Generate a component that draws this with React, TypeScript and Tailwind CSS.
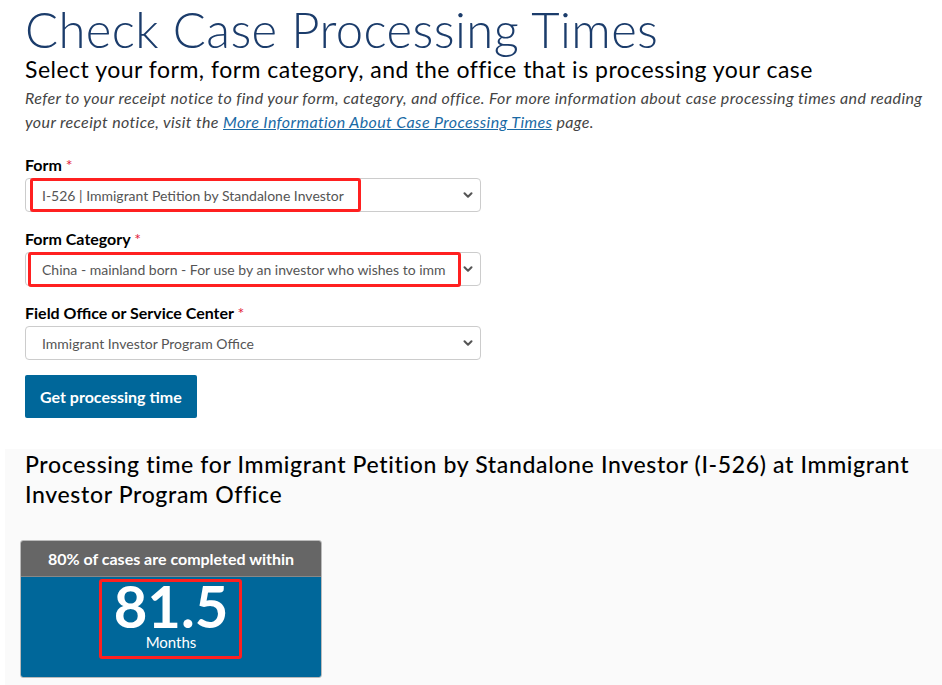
import { ChevronDown } from "lucide-react"

const font = { fontFamily: "Lato, 'Open Sans', sans-serif" }

const Field = ({
	label,
	value,
	mark,
}: {
	label: string
	value: string
	mark?: string
}) => {
	return (
		<div className="flex flex-col">
			<p className="text-[16px] font-bold text-black leading-[20px] mb-[3px]">
				{label} <span className="text-[#e31c3d] font-normal">*</span>
			</p>
			<div className="relative w-[456px]">
				<select
					className="appearance-none w-full h-[34px] border border-[#cccccc] rounded-[4px] bg-white pl-[16px] pr-[34px] text-[14px] text-[#555555] outline-none"
					defaultValue={value}
				>
					<option>{value}</option>
				</select>
				<ChevronDown
					className="absolute right-[6px] top-[10px] w-[14px] h-[14px] text-[#555555] pointer-events-none"
					strokeWidth={3.5}
				/>
				{mark && <div className={mark} />}
			</div>
		</div>
	)
}

export default function App() {
	return (
		<div className="w-[942px] min-h-[685px] bg-white overflow-hidden" style={font}>
			<div className="pl-[25px] pr-[5px]">
				<h1 className="text-[49px] font-light text-[#1b3c6b] leading-[58px] tracking-[0.4px]">
					Check Case Processing Times
				</h1>
				<h2 className="text-[23px] text-black leading-[26px] mt-[-2px] tracking-[0.5px]">
					Select your form, form category, and the office that is processing your case
				</h2>
				<p className="text-[16px] italic text-[#444444] leading-[24px] mt-[4px] tracking-[0.38px]">
					Refer to your receipt notice to find your form, category, and office. For more
					information about case processing times and reading your receipt notice, visit
					the{" "}
					<a href="#" className="text-[#1a6aa5] underline">
						More Information About Case Processing Times
					</a>{" "}
					page.
				</p>

				<div className="flex flex-col gap-[17px] mt-[21px]">
					<Field
						label="Form"
						value="I-526 | Immigrant Petition by Standalone Investor"
						mark="absolute left-[5px] top-[0px] w-[331px] h-[34px] border-[3px] border-[#ff2020] rounded-[3px] pointer-events-none"
					/>
					<Field
						label="Form Category"
						value="China - mainland born - For use by an investor who wishes to immigrate based on an investment"
						mark="absolute left-[3px] top-[0px] w-[433px] h-[35px] border-[3px] border-[#ff2020] rounded-[3px] pointer-events-none"
					/>
					<Field label="Field Office or Service Center" value="Immigrant Investor Program Office" />
				</div>

				<button className="mt-[15px] h-[43px] px-[15px] bg-[#00679a] text-white text-[16px] font-bold rounded-[2px]">
					Get processing time
				</button>
			</div>

			<div className="ml-[5px] mt-[31px] bg-[#fafafa] pl-[15px] pt-0 pb-[8px]">
				<h3 className="ml-[5px] text-[23px] font-medium text-black leading-[30px] pr-[20px] tracking-[0.65px]">
					Processing time for Immigrant Petition by Standalone Investor (I-526) at Immigrant
					Investor Program Office
				</h3>
				<div className="mt-[31px] w-[302px] rounded-[3px] overflow-hidden border border-[#bbbbbb]">
					<div className="h-[35px] bg-[#666666] flex items-center justify-center text-white text-[16px] font-bold">
						80% of cases are completed within
					</div>
					<div className="relative h-[101px] bg-[#00679a] border-t border-[#888888] flex flex-col items-center">
						<span className="text-[58px] font-bold text-white leading-[50px] mt-[4px]">81.5</span>
						<span className="text-[15px] text-white leading-[18px] mt-[2px]">Months</span>
						<div className="absolute left-[78px] top-[2px] w-[143px] h-[80px] border-[3px] border-[#ff2020] rounded-[3px]" />
					</div>
				</div>
			</div>
		</div>
	)
}
